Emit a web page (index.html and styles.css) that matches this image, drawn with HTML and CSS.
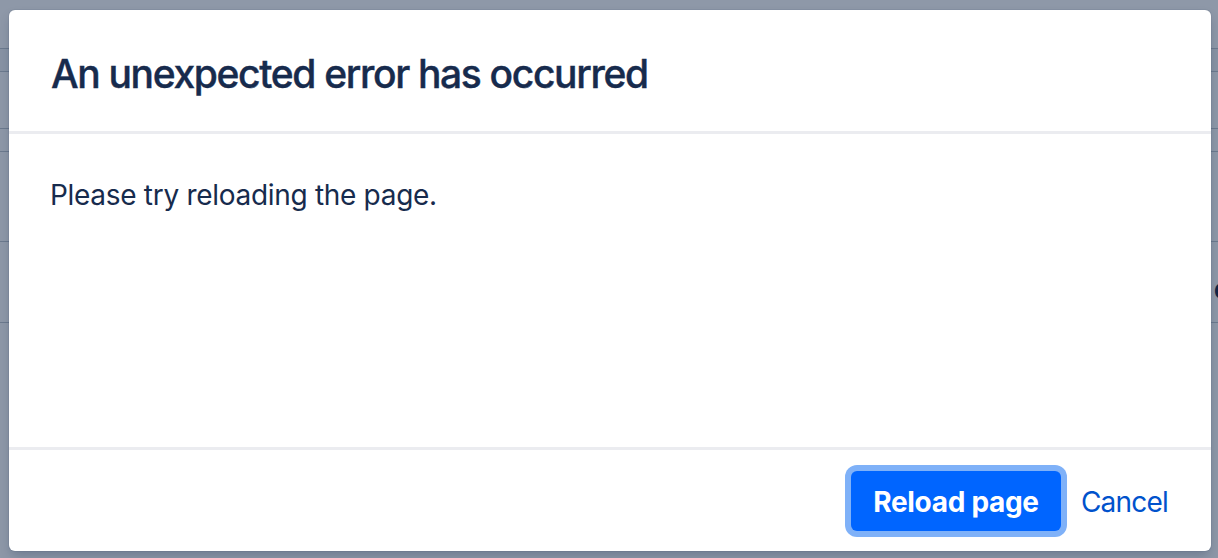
FILE: index.html
```html
<!DOCTYPE html>
<html lang="en">
<head>
<meta charset="utf-8">
<title>Error</title>
<link rel="stylesheet" href="styles.css">
</head>
<body>
<div class="page">
  <div class="bg-row bg-row-a"></div>
  <div class="bg-row bg-row-b"></div>
  <div class="bg-row bg-row-c"></div>
  <div class="bg-row bg-row-d"></div>
  <div class="bg-row bg-row-e"><span class="bg-text">c</span></div>
</div>
<div class="overlay">
  <div class="dialog" role="dialog">
    <header class="dialog-header">
      <h1 class="dialog-title">An unexpected error has occurred</h1>
    </header>
    <section class="dialog-body">
      <p class="dialog-text">Please try reloading the page.</p>
    </section>
    <footer class="dialog-footer">
      <button class="btn btn-primary">Reload page</button>
      <button class="btn btn-link">Cancel</button>
    </footer>
  </div>
</div>
</body>
</html>
```
FILE: styles.css
```css
* { box-sizing: border-box; }
html, body { margin: 0; padding: 0; }
body {
  width: 1218px;
  height: 558px;
  overflow: hidden;
  font-family: Inter, "Noto Sans", "Liberation Sans", sans-serif;
  background: #ffffff;
  position: relative;
}
.page {
  height: 558px;
  display: flex;
  flex-direction: column;
  padding-top: 48px;
}
.bg-row {
  border-top: 1px solid #c1c7d0;
}
.bg-row-a { height: 23px; background: #f4f5f7; }
.bg-row-b { height: 57px; }
.bg-row-c { height: 23px; }
.bg-row-d { height: 90px; }
.bg-row-e {
  height: 82px;
  border-bottom: 1px solid #c1c7d0;
  display: flex;
  justify-content: flex-end;
  align-items: flex-start;
  padding-top: 30px;
}
.bg-text {
  font-size: 28px;
  line-height: 34px;
  font-weight: 600;
  color: #172b4d;
  margin-right: -12px;
}
.overlay {
  position: absolute;
  inset: 0;
  background: rgba(9, 30, 66, 0.46);
  padding: 10px 7px 7px 9px;
}
.dialog {
  height: 541px;
  background: #ffffff;
  border-radius: 6px;
  box-shadow: 0 0 0 1px rgba(9, 30, 66, 0.06), 0 6px 12px -2px rgba(9, 30, 66, 0.25);
  display: flex;
  flex-direction: column;
  overflow: hidden;
}
.dialog-header {
  height: 124px;
  border-bottom: 3px solid #ebecf0;
  padding: 0 40px 0 42px;
  display: flex;
  align-items: flex-start;
}
.dialog-title {
  margin: 40px 0 0;
  font-size: 39px;
  line-height: 48px;
  font-weight: 500;
  color: #172b4d;
  letter-spacing: -1.35px;
  white-space: nowrap;
  -webkit-text-stroke: 0.4px #172b4d;
}
.dialog-body {
  flex: 1;
  padding: 0 40px 0 41px;
}
.dialog-text {
  margin: 43px 0 0;
  font-size: 28px;
  line-height: 36px;
  color: #172b4d;
  letter-spacing: -0.3px;
  white-space: nowrap;
}
.dialog-footer {
  height: 104px;
  border-top: 3px solid #ebecf0;
  display: flex;
  justify-content: flex-end;
  align-items: center;
  padding: 1px 21px 0 0;
}
.btn {
  font-family: inherit;
  font-size: 28px;
  border: none;
  cursor: pointer;
  height: 60px;
  border-radius: 6px;
  white-space: nowrap;
  padding-top: 2px;
}
.btn-primary {
  background: #0065ff;
  color: #ffffff;
  font-weight: 700;
  padding-left: 0;
  padding-right: 0;
  width: 210px;
  letter-spacing: -0.3px;
  box-shadow: 0 0 0 6px #7fb1f8;
}
.btn-link {
  background: transparent;
  color: #0052cc;
  font-weight: 400;
  padding-left: 20px;
  padding-right: 22px;
  letter-spacing: -0.8px;
}
```
